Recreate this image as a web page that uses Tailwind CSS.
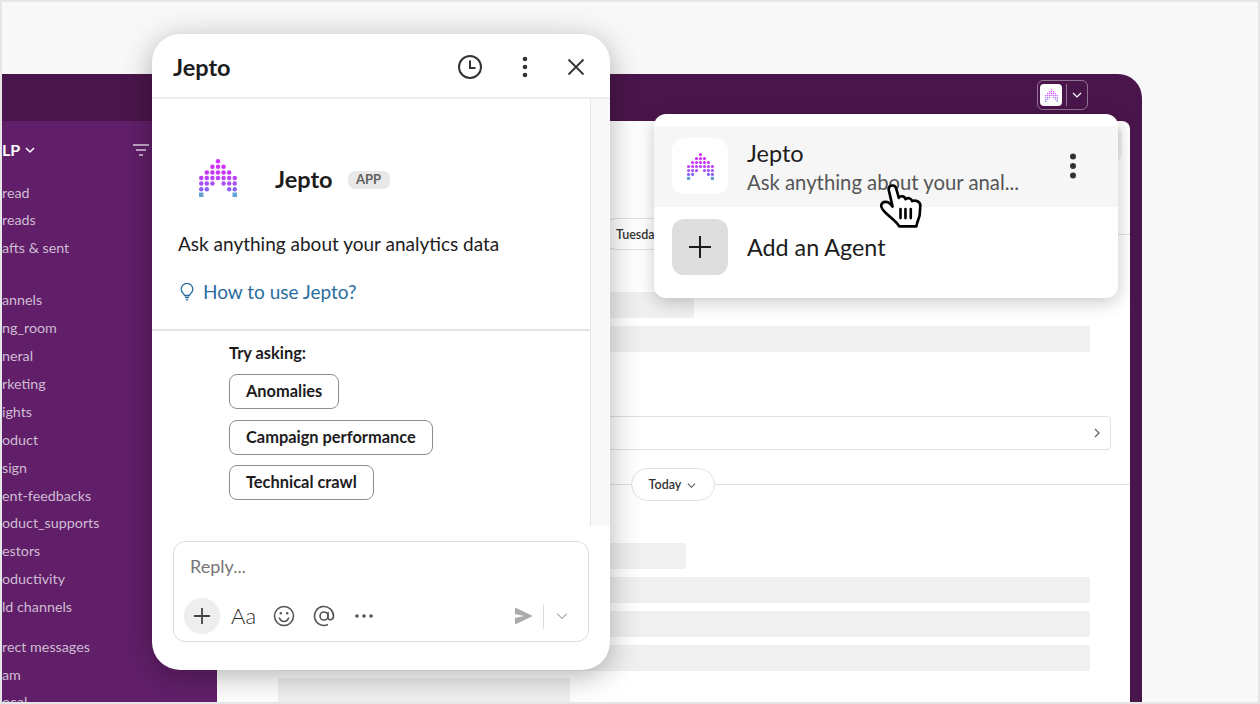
<!DOCTYPE html>
<html lang="en">
<head>
    <meta charset="UTF-8">
    <meta name="viewport" content="width=device-width, initial-scale=1.0">
    <script src="https://cdn.jsdelivr.net/npm/@tailwindcss/browser@4"></script>
    <title>Jepto</title>
</head>
<body class="bg-[#f8f8f8] font-['Lato',sans-serif] overflow-hidden">
    <!-- Jepto logo mark, reused at three sizes -->
    <svg class="hidden" xmlns="http://www.w3.org/2000/svg">
        <symbol id="jepto-mark" viewBox="-34 -4 68 68">
            <g fill="#d030f8"><circle cx="0" cy="0" r="4"/><circle cx="-10" cy="10" r="4"/><circle cx="0" cy="10" r="4"/><circle cx="10" cy="10" r="4"/></g>
            <g fill="#c835f8"><circle cx="-20" cy="20" r="4"/><circle cx="-10" cy="20" r="4"/><circle cx="0" cy="20" r="4"/><circle cx="10" cy="20" r="4"/><circle cx="20" cy="20" r="4"/></g>
            <g fill="#bd40f8"><circle cx="-30" cy="30" r="4"/><circle cx="-20" cy="30" r="4"/><circle cx="-10" cy="30" r="4"/><circle cx="0" cy="30" r="4"/><circle cx="10" cy="30" r="4"/><circle cx="20" cy="30" r="4"/><circle cx="30" cy="30" r="4"/></g>
            <g fill="#a850f8"><circle cx="-30" cy="40" r="4"/><circle cx="-20" cy="40" r="4"/><circle cx="-10" cy="40" r="4"/><circle cx="10" cy="40" r="4"/><circle cx="20" cy="40" r="4"/><circle cx="30" cy="40" r="4"/></g>
            <g fill="#8a62f5"><circle cx="-30" cy="50" r="4"/><circle cx="-20" cy="50" r="4"/><circle cx="20" cy="50" r="4"/><circle cx="30" cy="50" r="4"/></g>
            <g fill="#62a0d4"><rect x="-34" y="56" width="8" height="8"/><rect x="26" y="56" width="8" height="8"/></g>
        </symbol>
    </svg>

    <div class="relative w-[1260px] h-[704px] border-2 border-[#e6e6e6] overflow-hidden">
        <!-- Workspace window -->
        <div class="mt-[72px] w-[1140px] h-[628px] bg-[#4a154b] rounded-tr-[24px] flex flex-col overflow-hidden">
            <div class="h-[47px] shrink-0 flex justify-end pr-[54px] pt-[6px]">
                <div class="h-[30px] w-[51px] border border-white/40 rounded-[6px] flex items-center pl-[2px]">
                    <div class="w-[22px] h-[22px] bg-white rounded-[4px] flex items-center justify-center">
                        <svg class="w-[13px] h-[13px] opacity-80"><use href="#jepto-mark"/></svg>
                    </div>
                    <div class="w-px h-[22px] bg-white/40 ml-[4px]"></div>
                    <svg class="w-[10px] h-[10px] ml-[5px]" viewBox="0 0 10 10" fill="none" stroke="#fff" stroke-width="1.2"><path d="M1 3l4 4 4-4"/></svg>
                </div>
            </div>
            <div class="flex flex-1 min-h-0">
                <!-- Sidebar, cut off by the frame on the left -->
                <div class="w-[215px] shrink-0 bg-[#611f69] text-[14.3px] leading-[27.9px] text-[#cfbcd3] overflow-hidden">
                    <div class="h-[57.5px] flex items-center text-white">
                        <span class="font-bold text-[16px]">LP</span>
                        <svg class="w-[10px] h-[10px] ml-[5px]" viewBox="0 0 10 10" fill="none" stroke="#fff" stroke-width="1.5"><path d="M1 3l4 4 4-4"/></svg>
                        <svg class="w-[16px] h-[14px] ml-[98px]" viewBox="0 0 16 14" fill="none" stroke="#e0d2e2" stroke-width="1.4"><path d="M0 2h16M3 7h10M6 12h4"/></svg>
                    </div>
                    <div>read</div>
                    <div>reads</div>
                    <div>afts &amp; sent</div>
                    <div class="mt-[24px]">annels</div>
                    <div>ng_room</div>
                    <div>neral</div>
                    <div>rketing</div>
                    <div>ights</div>
                    <div>oduct</div>
                    <div>sign</div>
                    <div>ent-feedbacks</div>
                    <div>oduct_supports</div>
                    <div>estors</div>
                    <div>oductivity</div>
                    <div>ld channels</div>
                    <div class="mt-[11.5px]">rect messages</div>
                    <div>am</div>
                    <div>ocal</div>
                </div>
                <!-- Channel pane with placeholder messages -->
                <div class="w-[913px] shrink-0 bg-white rounded-tr-[8px] overflow-hidden pt-[7px]">
                    <div class="flex justify-end pr-[8px]">
                        <div class="w-[300px] h-[32px] bg-[#f0f0f0] rounded-[6px]"></div>
                    </div>
                    <div class="mt-[58px] h-[32px] flex items-center">
                        <div class="w-[383px] h-px bg-[#e0e0e0]"></div>
                        <div class="h-[32px] px-[15px] pt-[2px] flex items-center border border-[#e0e0e0] rounded-full text-[12.5px] font-semibold text-[#333]">Tuesday</div>
                        <div class="flex-1 h-px bg-[#e0e0e0]"></div>
                    </div>
                    <div class="ml-[61px] mt-[42px] flex flex-col gap-[8px]">
                        <div class="w-[416px] h-[26px] bg-[#f0f0f0] rounded-[2px]"></div>
                        <div class="w-[812px] h-[26px] bg-[#f0f0f0] rounded-[2px]"></div>
                    </div>
                    <div class="ml-[61px] mt-[64px] w-[833px] h-[34px] border border-[#e0e0e0] rounded-[4px] flex items-center justify-end pr-[8px]">
                        <svg class="w-[10px] h-[10px]" viewBox="0 0 10 10" fill="none" stroke="#666" stroke-width="1.3"><path d="M3 1l4 4-4 4"/></svg>
                    </div>
                    <div class="mt-[18px] h-[33px] flex items-center">
                        <div class="w-[414px] h-px bg-[#e0e0e0]"></div>
                        <div class="w-[84px] h-[33px] pt-[2px] pr-[1px] flex items-center justify-center gap-[6px] border border-[#e0e0e0] rounded-full text-[12.5px] font-semibold text-[#333]">
                            Today
                            <svg class="w-[9px] h-[9px]" viewBox="0 0 10 10" fill="none" stroke="#555" stroke-width="1.2"><path d="M1 3l4 4 4-4"/></svg>
                        </div>
                        <div class="flex-1 h-px bg-[#e0e0e0]"></div>
                    </div>
                    <div class="ml-[61px] mt-[42px] flex flex-col gap-[8px]">
                        <div class="w-[408px] h-[26px] bg-[#f0f0f0] rounded-[2px]"></div>
                        <div class="w-[812px] h-[26px] bg-[#f0f0f0] rounded-[2px]"></div>
                        <div class="w-[812px] h-[26px] bg-[#f0f0f0] rounded-[2px]"></div>
                        <div class="w-[812px] h-[26px] bg-[#f0f0f0] rounded-[2px]"></div>
                        <div class="w-[292px] h-[26px] bg-[#f0f0f0] mt-[-1px]"></div>
                    </div>
                </div>
            </div>
        </div>

        <!-- Chat window -->
        <div class="absolute left-[150px] top-[32px] w-[458px] h-[636px] bg-white rounded-[28px] shadow-[0_6px_30px_rgba(0,0,0,0.3)] flex flex-col text-[#1d1c1d]">
            <div class="h-[65px] shrink-0 flex items-center pl-[21px] pr-[25px] pt-[3px] border-b-2 border-[#ededed]">
                <span class="text-[23.5px] font-bold mt-[1px]">Jepto</span>
                <svg class="ml-auto w-[26px] h-[26px]" viewBox="0 0 26 26" fill="none" stroke="#333" stroke-width="2"><circle cx="13" cy="13" r="11"/><path d="M13 6.5V14h5.5"/></svg>
                <svg class="w-[6px] h-[22px] ml-[39px]" viewBox="0 0 6 22" fill="#333"><circle cx="3" cy="3" r="2.3"/><circle cx="3" cy="11" r="2.3"/><circle cx="3" cy="19" r="2.3"/></svg>
                <svg class="w-[18px] h-[18px] ml-[39px]" viewBox="0 0 18 18" fill="none" stroke="#333" stroke-width="1.8"><path d="M1.5 1.5l15 15M16.5 1.5l-15 15"/></svg>
            </div>
            <div class="h-[427px] shrink-0 flex">
                <div class="w-[438px] shrink-0">
                    <div class="pl-[47px] pt-[59px] flex items-center">
                        <svg class="w-[38px] h-[38px]"><use href="#jepto-mark"/></svg>
                        <span class="ml-[38px] mt-[4px] text-[23.5px] font-bold">Jepto</span>
                        <span class="ml-[15px] mt-[4px] h-[18px] w-[42px] rounded-[7px] bg-[#e8e8e8] text-[13px] font-bold text-[#616061] flex items-center justify-center">APP</span>
                    </div>
                    <p class="pl-[26px] mt-[35px] text-[19px] leading-[24px]">Ask anything about your analytics data</p>
                    <div class="pl-[28px] mt-[24px] flex items-center text-[#2a6d9e]">
                        <svg class="w-[14px] h-[18px]" viewBox="0 0 14 18" fill="none" stroke="#2a6d9e" stroke-width="1.3"><path d="M4.5 12.5C4 10.5 1.2 9.5 1.2 6.2a5.8 5.8 0 0 1 11.6 0c0 3.3-2.8 4.3-3.3 6.3zM5 14.5h4M5.8 16.8h2.4"/></svg>
                        <a class="ml-[9px] text-[19px] leading-[24px]">How to use Jepto?</a>
                    </div>
                    <div class="mt-[25px] h-[2px] bg-[#e4e4e4]"></div>
                    <div class="pl-[77px] pt-[12px]">
                        <p class="text-[16.4px] leading-[20px] font-bold">Try asking:</p>
                        <div class="mt-[11px] flex flex-col items-start gap-[10.5px] text-[16.4px] font-bold">
                            <div class="h-[35px] px-[16px] flex items-center border border-[#8d8d8d] rounded-[8px]">Anomalies</div>
                            <div class="h-[35px] px-[16px] flex items-center border border-[#8d8d8d] rounded-[8px]">Campaign performance</div>
                            <div class="h-[35px] px-[16px] flex items-center border border-[#8d8d8d] rounded-[8px]">Technical crawl</div>
                        </div>
                    </div>
                </div>
                <div class="flex-1 bg-[#f8f8f8] border-l border-[#e6e6e6]"></div>
            </div>
            <!-- Composer -->
            <div class="px-[21px] pt-[15px]">
                <div class="h-[101px] border border-[#dddddd] rounded-[12px] pt-[12px]">
                    <p class="pl-[16px] text-[18px] leading-[24px] text-[#767676]">Reply...</p>
                    <div class="mt-[20px] pl-[10px] pr-[20px] flex items-center text-[#555]">
                        <div class="w-[36px] h-[36px] rounded-full bg-[#eeeeee] flex items-center justify-center">
                            <svg class="w-[18px] h-[18px]" viewBox="0 0 18 18" fill="none" stroke="#444" stroke-width="1.8"><path d="M9 1v16M1 9h16"/></svg>
                        </div>
                        <span class="ml-[11px] w-[26px] text-[22px] leading-[24px] font-light text-[#2e2e2e]">Aa</span>
                        <svg class="ml-[16px] w-[22px] h-[22px]" viewBox="0 0 22 22" fill="none" stroke="#555" stroke-width="1.6"><circle cx="11" cy="11" r="9.5"/><path d="M6.2 12.5c1 2.6 2.8 4 4.8 4s3.8-1.4 4.8-4"/><circle cx="7.8" cy="8.2" r="1.2" fill="#555" stroke="none"/><circle cx="14.2" cy="8.2" r="1.2" fill="#555" stroke="none"/></svg>
                        <svg class="ml-[18px] w-[22px] h-[22px]" viewBox="0 0 22 22" fill="none" stroke="#555" stroke-width="1.6"><circle cx="11" cy="11" r="4"/><path d="M15 7v5.5c0 3.5 5.5 3 5.5-1.5A9.5 9.5 0 1 0 15 19.6"/></svg>
                        <svg class="ml-[18px] w-[22px] h-[6px]" viewBox="0 0 22 6" fill="#555"><circle cx="4" cy="3" r="1.8"/><circle cx="11" cy="3" r="1.8"/><circle cx="18" cy="3" r="1.8"/></svg>
                        <svg class="ml-auto w-[18px] h-[18px]" viewBox="0 0 18 18" fill="#ababab"><path d="M0 0.5L18 9 0 17.5V11l9-2-9-2z"/></svg>
                        <div class="ml-[10px] w-px h-[25px] bg-[#dddddd]"></div>
                        <svg class="ml-[12px] w-[12px] h-[12px]" viewBox="0 0 10 10" fill="none" stroke="#aaa" stroke-width="1"><path d="M1 3l4 4 4-4"/></svg>
                    </div>
                </div>
            </div>
        </div>

        <!-- Agent menu -->
        <div class="absolute left-[652px] top-[112px] w-[464px] h-[184px] bg-white rounded-[12px] shadow-[0_4px_18px_rgba(0,0,0,0.22)] pt-[12px] text-[#1d1c1d]">
            <div class="h-[81px] bg-[#f6f6f6] flex items-start pt-[12px] pl-[18px] pr-[41px]">
                <div class="w-[56px] h-[56px] bg-white rounded-[12px] flex items-center justify-center">
                    <svg class="w-[27px] h-[27px]"><use href="#jepto-mark"/></svg>
                </div>
                <div class="ml-[19px] flex-1">
                    <p class="text-[23.5px] leading-[30px]">Jepto</p>
                    <p class="text-[20.3px] leading-[28px] text-[#555]">Ask anything about your anal...</p>
                </div>
                <svg class="w-[8px] h-[26px] mt-[15px]" viewBox="0 0 8 26" fill="#333"><circle cx="4" cy="3.5" r="3"/><circle cx="4" cy="13" r="3"/><circle cx="4" cy="22.5" r="3"/></svg>
            </div>
            <div class="flex items-center pl-[18px] pt-[12px]">
                <div class="w-[56px] h-[56px] bg-[#dedede] rounded-[12px] flex items-center justify-center">
                    <svg class="w-[22px] h-[22px]" viewBox="0 0 22 22" fill="none" stroke="#1d1c1d" stroke-width="2"><path d="M11 0v22M0 11h22"/></svg>
                </div>
                <p class="ml-[19px] text-[23.3px] leading-[28px]">Add an Agent</p>
            </div>
        </div>

        <!-- Pointer over the first row -->
        <svg class="absolute left-[878px] top-[181px] w-[43px] h-[47px]" viewBox="60 40 130 140" fill="#fff" stroke="#000" stroke-width="8" stroke-linejoin="round" stroke-linecap="round">
            <path d="M86 58C86 44 106 42 109 56L117 84C122 76 135 78 137 88C143 82 155 84 157 94C164 90 180 93 182 106L180 135C178 148 172 155 170 170L118 170C110 155 93 145 76 128C68 120 62 112 64 105C68 93 83 94 90 101L98 110Z"/>
            <path d="M122 118V145M137 118V145M153 118V145" fill="none"/>
        </svg>
    </div>
</body>
</html>
